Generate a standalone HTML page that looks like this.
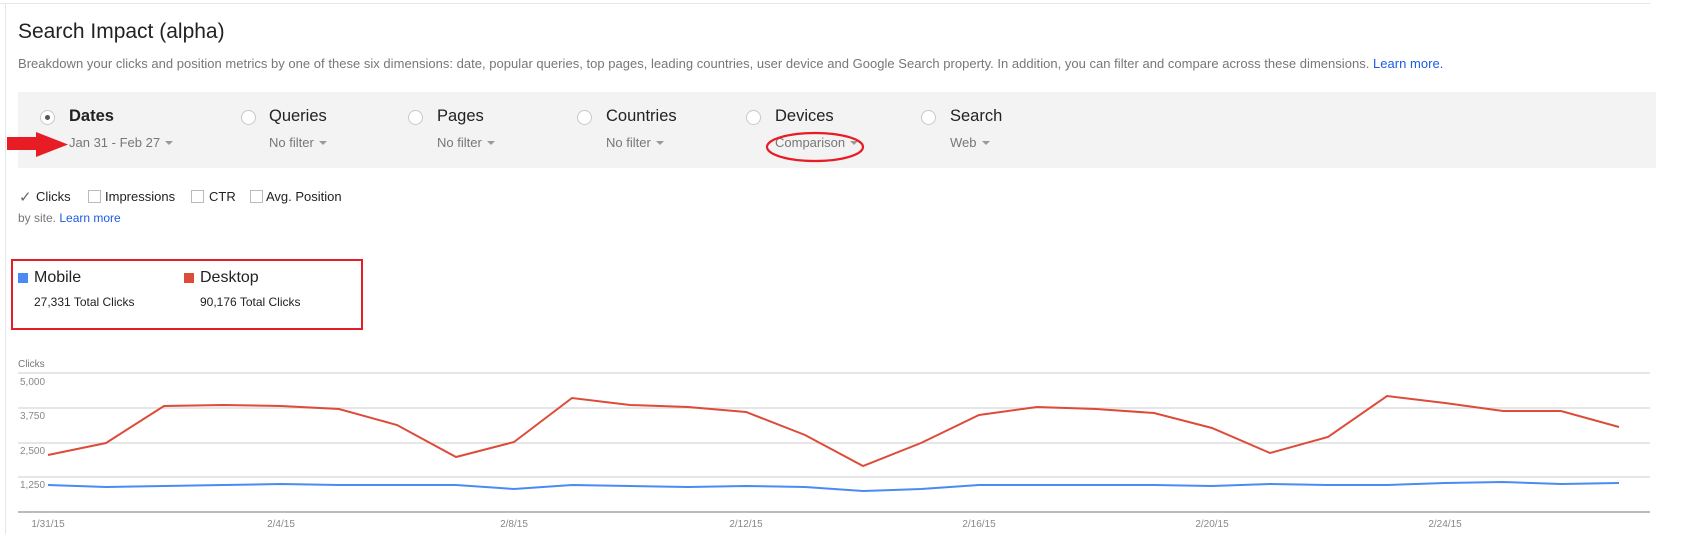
<!DOCTYPE html>
<html><head><meta charset="utf-8"><style>
*{margin:0;padding:0;box-sizing:border-box}
body{width:1685px;height:539px;background:#fff;font-family:"Liberation Sans",Arial,sans-serif;position:relative;overflow:hidden;color:#222}
.a{position:absolute;white-space:nowrap}
.radio{position:absolute;width:15px;height:15px;border:1px solid #c8c8c8;border-radius:50%;background:#fff}
.lab{font-size:16.5px;color:#222}
.sub{font-size:13px;color:#777}
.tri{display:inline-block;width:0;height:0;border-left:4px solid transparent;border-right:4px solid transparent;border-top:4px solid #999;vertical-align:middle;margin-left:5px;margin-top:-2px}
.cb{position:absolute;width:13px;height:13px;border:1px solid #bbb;background:#fff}
.ck{font-size:13px;color:#222}
</style></head><body>
<div class="a" style="left:0;top:3px;width:1650px;height:1px;background:#e6e6e6"></div>
<div class="a" style="left:5px;top:4px;width:1px;height:530px;background:#e6e6e6"></div>
<div class="a" style="left:18px;top:20px;font-size:21px;color:#222">Search Impact (alpha)</div>
<div class="a" style="left:18px;top:56px;font-size:13px;color:#777;letter-spacing:0.02px">Breakdown your clicks and position metrics by one of these six dimensions: date, popular queries, top pages, leading countries, user device and Google Search property. In addition, you can filter and compare across these dimensions. <span style="color:#1a5ce6">Learn more.</span></div>
<div class="a" style="left:18px;top:92px;width:1638px;height:76px;background:#f3f3f3"></div>

<div class="radio" style="left:40px;top:110px"><div style="position:absolute;left:4px;top:4px;width:5px;height:5px;border-radius:50%;background:#555"></div></div>
<div class="a lab" style="left:69px;top:107px;font-weight:bold">Dates</div>
<div class="a sub" style="left:69px;top:135px">Jan 31 - Feb 27<span class="tri"></span></div>

<div class="radio" style="left:241px;top:110px"></div>
<div class="a lab" style="left:269px;top:107px">Queries</div>
<div class="a sub" style="left:269px;top:135px">No filter<span class="tri"></span></div>

<div class="radio" style="left:408px;top:110px"></div>
<div class="a lab" style="left:437px;top:107px">Pages</div>
<div class="a sub" style="left:437px;top:135px">No filter<span class="tri"></span></div>

<div class="radio" style="left:577px;top:110px"></div>
<div class="a lab" style="left:606px;top:107px">Countries</div>
<div class="a sub" style="left:606px;top:135px">No filter<span class="tri"></span></div>

<div class="radio" style="left:746px;top:110px"></div>
<div class="a lab" style="left:775px;top:107px">Devices</div>
<div class="a sub" style="left:775px;top:135px">Comparison<span class="tri"></span></div>

<div class="radio" style="left:921px;top:110px"></div>
<div class="a lab" style="left:950px;top:107px">Search</div>
<div class="a sub" style="left:950px;top:135px">Web<span class="tri"></span></div>

<svg class="a" style="left:0;top:0" width="1685" height="539">
<polygon points="7,137 36,137 36,132 68,144.5 36,157 36,150 7,150" fill="#e81c24"/>
<ellipse cx="815" cy="147" rx="48" ry="14" fill="none" stroke="#e81c24" stroke-width="2.2"/>
</svg>

<div class="a" style="left:19px;top:188px;font-size:15px;color:#666">✓</div>
<div class="a ck" style="left:36px;top:189px">Clicks</div>
<div class="cb" style="left:88px;top:190px"></div>
<div class="a ck" style="left:105px;top:189px">Impressions</div>
<div class="cb" style="left:191px;top:190px"></div>
<div class="a ck" style="left:209px;top:189px">CTR</div>
<div class="cb" style="left:250px;top:190px"></div>
<div class="a ck" style="left:266px;top:189px">Avg. Position</div>
<div class="a" style="left:18px;top:211px;font-size:12px;color:#777">by site. <span style="color:#1a5ce6">Learn more</span></div>

<div class="a" style="left:11px;top:259px;width:352px;height:71px;border:2px solid #e81c24"></div>
<div class="a" style="left:18px;top:273px;width:10px;height:10px;background:#4a8af4"></div>
<div class="a" style="left:34px;top:269px;font-size:16px;color:#222">Mobile</div>
<div class="a" style="left:34px;top:295px;font-size:12px;color:#222">27,331 Total Clicks</div>
<div class="a" style="left:184px;top:273px;width:10px;height:10px;background:#dd4b39"></div>
<div class="a" style="left:200px;top:269px;font-size:16px;color:#222">Desktop</div>
<div class="a" style="left:200px;top:295px;font-size:12px;color:#222">90,176 Total Clicks</div>

<svg class="a" style="left:0;top:0" width="1685" height="539" font-family="Liberation Sans, Arial, sans-serif">
<text x="18" y="367" font-size="10" fill="#777">Clicks</text>
<g stroke="#ddd" stroke-width="1.5">
<line x1="18" y1="373" x2="1650" y2="373"/>
<line x1="18" y1="408" x2="1650" y2="408"/>
<line x1="18" y1="443" x2="1650" y2="443"/>
<line x1="18" y1="477" x2="1650" y2="477"/>
</g>
<line x1="18" y1="512" x2="1650" y2="512" stroke="#bbb" stroke-width="2"/>
<g font-size="10" fill="#888">
<text x="20" y="385">5,000</text>
<text x="20" y="419">3,750</text>
<text x="20" y="454">2,500</text>
<text x="20" y="488">1,250</text>
</g>
<g font-size="10" fill="#888" text-anchor="middle">
<text x="48" y="527">1/31/15</text>
<text x="281" y="527">2/4/15</text>
<text x="514" y="527">2/8/15</text>
<text x="746" y="527">2/12/15</text>
<text x="979" y="527">2/16/15</text>
<text x="1212" y="527">2/20/15</text>
<text x="1445" y="527">2/24/15</text>
</g>
<polyline fill="none" stroke="#dd4b39" stroke-width="2" points="48,455 106,443 164,406 223,405 281,406 339,409 397,425 456,457 514,442 572,398 630,405 688,407 746,412 805,435 863,466 921,443 979,415 1037,407 1096,409 1154,413 1212,428 1270,453 1328,437 1387,396 1445,403 1503,411 1561,411 1619,427"/>
<polyline fill="none" stroke="#4a8af4" stroke-width="2" points="48,485 106,487 164,486 223,485 281,484 339,485 397,485 456,485 514,489 572,485 630,486 688,487 746,486 805,487 863,491 921,489 979,485 1037,485 1096,485 1154,485 1212,486 1270,484 1328,485 1387,485 1445,483 1503,482 1561,484 1619,483"/>
</svg>
</body></html>
